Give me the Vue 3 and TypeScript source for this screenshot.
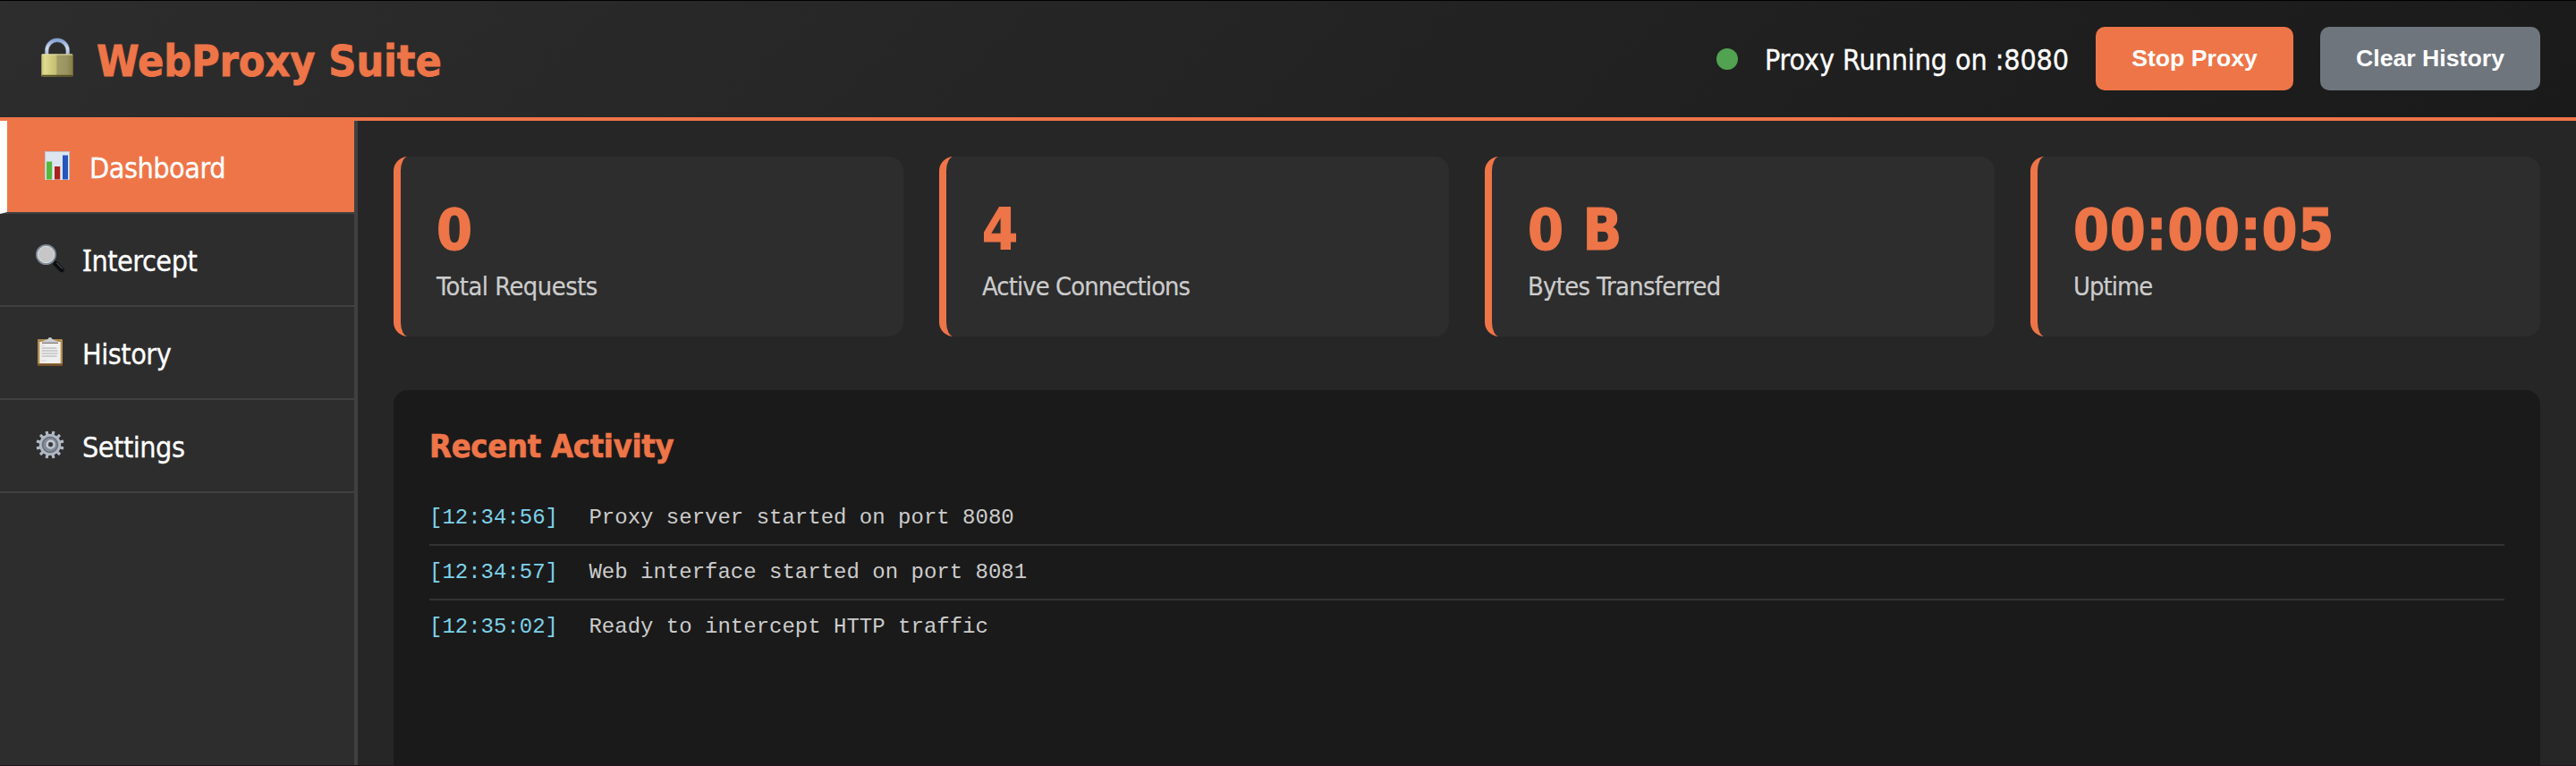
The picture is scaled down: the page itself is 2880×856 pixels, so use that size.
<script setup lang="ts">
type IconName = 'chart' | 'lens' | 'clipboard' | 'gear'

interface NavItem {
  label: string
  icon: IconName
  key: string
}

interface Stat {
  value: string
  label: string
  key: string
}

interface LogEntry {
  time: string
  message: string
  key: string
}

const navItems: NavItem[] = [
  { label: 'Dashboard', icon: 'chart', key: 'dashboard' },
  { label: 'Intercept', icon: 'lens', key: 'intercept' },
  { label: 'History', icon: 'clipboard', key: 'history' },
  { label: 'Settings', icon: 'gear', key: 'settings' },
]
const active = 'dashboard'

const stats: Stat[] = [
  { value: '0', label: 'Total Requests', key: 'requests' },
  { value: '4', label: 'Active Connections', key: 'connections' },
  { value: '0 B', label: 'Bytes Transferred', key: 'bytes' },
  { value: '00:00:05', label: 'Uptime', key: 'uptime' },
]

const logs: LogEntry[] = [
  { time: '[12:34:56]', message: 'Proxy server started on port 8080', key: 'proxy' },
  { time: '[12:34:57]', message: 'Web interface started on port 8081', key: 'web' },
  { time: '[12:35:02]', message: 'Ready to intercept HTTP traffic', key: 'ready' },
]

const teeth: number[] = Array.from({ length: 12 }, (_, i) => i * 30 + 15)
</script>

<template>
  <div class="app">
    <header class="header">
      <div class="brand">
        <svg class="lock" viewBox="0 0 36 44">
          <defs>
            <linearGradient id="brass" x1="0" x2="1" y1="0" y2="0">
              <stop offset="0" stop-color="#c6c070" />
              <stop offset=".1" stop-color="#dfdb90" />
              <stop offset=".46" stop-color="#c4be72" />
              <stop offset=".5" stop-color="#a29c68" />
              <stop offset=".8" stop-color="#9a9462" />
              <stop offset="1" stop-color="#857c42" />
            </linearGradient>
            <linearGradient id="steel" x1="0" x2="0" y1="0" y2="1">
              <stop offset="0" stop-color="#86a4d6" />
              <stop offset=".5" stop-color="#cfdcf2" />
              <stop offset="1" stop-color="#a9b4c6" />
            </linearGradient>
          </defs>
          <path d="M6.300 20V14.500a11.700 11.700 0 0 1 23.400 0V20" fill="none" stroke="#66707f" stroke-width="4.800" />
          <path d="M6.300 20V14.500a11.700 11.700 0 0 1 23.400 0V20" fill="none" stroke="url(#steel)" stroke-width="3.400" />
          <rect x=".3" y="18.500" width="35.400" height="25" rx="1" fill="url(#brass)" />
          <path d="M1 19h34" stroke="#e6e2ac" stroke-width="1" />
          <path d="M1 42.600h34" stroke="#575021" stroke-width="1.600" />
        </svg>
        <h1 class="title">WebProxy Suite</h1>
      </div>
      <div class="controls">
        <span class="dot"></span>
        <span class="status">Proxy Running on :8080</span>
        <button class="btn stop" type="button">Stop Proxy</button>
        <button class="btn clear" type="button">Clear History</button>
      </div>
    </header>

    <div class="body">
      <nav class="sidebar">
        <a v-for="item in navItems" :key="item.key" class="nav-item" :class="[item.key, { active: item.key === active }]">
          <svg class="icon" viewBox="0 0 32 32">
            <g v-if="item.icon === 'chart'">
              <rect x="2" y="0" width="28" height="32" fill="#b8c4d4" />
              <rect x="3" y="1" width="26" height="31" fill="#dde6f0" />
              <rect x="4" y="11.5" width="6.2" height="20" fill="#55b83c" />
              <rect x="13" y="17" width="6.2" height="14.5" fill="#ab221a" />
              <rect x="22" y="4.5" width="6" height="27" fill="#2456bd" />
            </g>
            <g v-else-if="item.icon === 'lens'">
              <path d="M20 20l3 3" stroke="#8f98a3" stroke-width="3" />
              <path d="M22 21.500l7 7" stroke="#0c0d0f" stroke-width="5.400" stroke-linecap="round" />
              <path d="M23.500 21l6.200 6.200" stroke="#68707a" stroke-width="1" stroke-linecap="round" />
              <circle cx="11.500" cy="11.500" r="10.300" fill="#c6c6c6" stroke="#7e8996" stroke-width="2.400" />
              <circle cx="11.500" cy="11.500" r="9.200" fill="none" stroke="#e3e6e9" stroke-width="1" />
            </g>
            <g v-else-if="item.icon === 'clipboard'">
              <rect x="2" y="2" width="28" height="30" rx="1" fill="#b28a4d" />
              <rect x="2" y="29.500" width="28" height="2.500" fill="#76512a" />
              <rect x="4.300" y="5" width="23.400" height="24" fill="#efefef" />
              <path d="M6.500 12h17M6.500 15h18M6.500 18h18M6.500 21h17" stroke="#cdcdcd" stroke-width="2" />
              <path d="M6 9h4M6 26h6" stroke="#d4d4d4" stroke-width="1" />
              <path d="M7 6V4.500q5-2 6.500-2.500a2.600 2.600 0 0 1 5 0q2 1 6.500 2.500V6z" fill="#c9ced4" />
              <path d="M7 6.300h18" stroke="#84746b" stroke-width="1.200" />
            </g>
            <g v-else>
              <rect
                v-for="angle in teeth"
                :key="angle"
                x="14.400"
                y="0.400"
                width="3.200"
                height="7"
                rx=".6"
                fill="#b0b8c4"
                :transform="`rotate(${angle} 16 16)`"
              />
              <circle cx="16" cy="16" r="10.800" fill="#8d95a0" stroke="#b0b8c4" stroke-width="2.600" />
              <circle cx="16" cy="16" r="8.400" fill="#858c97" stroke="#636a74" stroke-width="1.200" />
              <circle cx="16.600" cy="15.700" r="4" fill="#565b62" stroke="#c6ced8" stroke-width="2.200" />
              <circle cx="16.600" cy="15.700" r="1.700" fill="#2d2d2d" />
            </g>
          </svg>
          <span class="nav-label">{{ item.label }}</span>
        </a>
      </nav>

      <main class="main">
        <section class="stats">
          <article v-for="stat in stats" :key="stat.key" class="card">
            <div class="value">{{ stat.value }}</div>
            <div class="label" :class="stat.key">{{ stat.label }}</div>
          </article>
        </section>
        <section class="panel">
          <h2 class="panel-title">Recent Activity</h2>
          <div v-for="log in logs" :key="log.key" class="log">
            <span class="time">{{ log.time }}</span>
            <span>{{ log.message }}</span>
          </div>
        </section>
      </main>
    </div>
  </div>
</template>

<style>
body {
  margin: 0;
  background: #262626;
  overflow: hidden;
}
</style>

<style scoped>
.app {
  box-sizing: border-box;
  display: flex;
  flex-direction: column;
  width: 2880px;
  height: 856px;
  overflow: hidden;
  border-top: 1px solid #000;
  border-bottom: 1px solid #1e171b;
  background: #262626;
  color: #fff;
  font-family: "DejaVu Sans Condensed", "DejaVu Sans", sans-serif;
  font-stretch: condensed;
  font-size: 32px;
}
.header {
  box-sizing: border-box;
  flex: none;
  display: flex;
  align-items: center;
  justify-content: space-between;
  height: 134px;
  padding: 0 40px;
  border-bottom: 4px solid #ee7548;
  background: linear-gradient(135deg, #2d2d2d, #1a1a1a);
}
.brand {
  display: flex;
  align-items: center;
}
.lock {
  width: 36px;
  height: 44px;
  margin: 0 26px 4px 6px;
}
.title {
  margin: 0;
  padding-top: 3px;
  color: #ee7548;
  font-size: 48px;
  font-weight: bold;
  line-height: 60px;
  letter-spacing: -0.05px;
  white-space: nowrap;
  -webkit-text-stroke: 0.8px #ee7548;
}
.controls {
  display: flex;
  align-items: center;
}
.dot {
  width: 24px;
  height: 24px;
  margin-right: 30px;
  border-radius: 50%;
  background: #51a351;
}
.status {
  margin-right: 30px;
  padding-top: 2px;
  line-height: 40px;
  letter-spacing: -0.12px;
  white-space: nowrap;
  -webkit-text-stroke: 0.3px #fff;
}
.btn {
  box-sizing: border-box;
  height: 71px;
  margin-bottom: 1px;
  padding: 0 0 2px;
  border: 0;
  border-radius: 10px;
  color: #fff;
  font: bold 26.67px/30px "Liberation Sans", Arial, sans-serif;
}
.stop {
  width: 221px;
  margin-right: 30px;
  background: #ee7548;
}
.clear {
  width: 246px;
  background: #6e757d;
}
.body {
  flex: 1;
  display: flex;
  min-height: 0;
}
.sidebar {
  box-sizing: border-box;
  flex: none;
  width: 400px;
  border-right: 4px solid #404040;
  background: #2d2d2d;
}
.nav-item {
  box-sizing: border-box;
  display: flex;
  align-items: center;
  height: 104px;
  padding: 0 40px;
  border-bottom: 2px solid #404040;
}
.nav-item.active {
  border-left: 8px solid #fff;
  background: #ee7548;
}
.icon {
  width: 32px;
  height: 32px;
  margin: 0 20px 2px 0;
}
.nav-label {
  display: block;
  padding-top: 4px;
  line-height: 44px;
  letter-spacing: -0.45px;
  -webkit-text-stroke: 0.3px #fff;
}
.intercept .nav-label {
  padding-top: 2px;
}
/* Capital I with serifs */
.intercept .nav-label::first-letter {
  font-family: "Noto Sans", sans-serif;
}
.main {
  flex: 1;
  display: flex;
  flex-direction: column;
  gap: 60px;
  min-width: 0;
  padding: 40px 40px 0;
}
.stats {
  flex: none;
  display: grid;
  grid-template-columns: repeat(4, 1fr);
  gap: 40px;
}
.card {
  box-sizing: border-box;
  height: 201px;
  padding: 40px;
  border-left: 8px solid #ee7548;
  border-radius: 16px;
  background: #2d2d2d;
}
.value {
  color: #ee7548;
  font-size: 64px;
  font-weight: bold;
  line-height: 84px;
  letter-spacing: 0.7px;
  -webkit-text-stroke: 1.2px #ee7548;
}
.label {
  color: #ccc;
  font-size: 28.8px;
  line-height: 42px;
  -webkit-text-stroke: 0.2px #ccc;
}
.requests {
  letter-spacing: -0.5px;
}
.connections {
  letter-spacing: -0.9px;
}
.bytes {
  letter-spacing: -0.65px;
}
.uptime {
  letter-spacing: -0.95px;
}
.panel {
  flex: 1;
  padding: 40px;
  border-radius: 16px 16px 0 0;
  background: #1a1a1a;
}
.panel-title {
  margin: 0 0 27px;
  color: #ee7548;
  font-size: 36px;
  font-weight: bold;
  line-height: 46px;
  letter-spacing: -0.28px;
  -webkit-text-stroke: 0.6px #ee7548;
}
.log {
  box-sizing: border-box;
  height: 61px;
  padding: 16px 0;
  border-bottom: 2px solid #333;
  color: #ccc;
  font: 24px/27px "Liberation Mono", "Courier New", monospace;
  white-space: nowrap;
}
.log:last-child {
  border-bottom: 0;
}
.time {
  margin-right: 34.4px;
  color: #7ed2ea;
}
</style>
